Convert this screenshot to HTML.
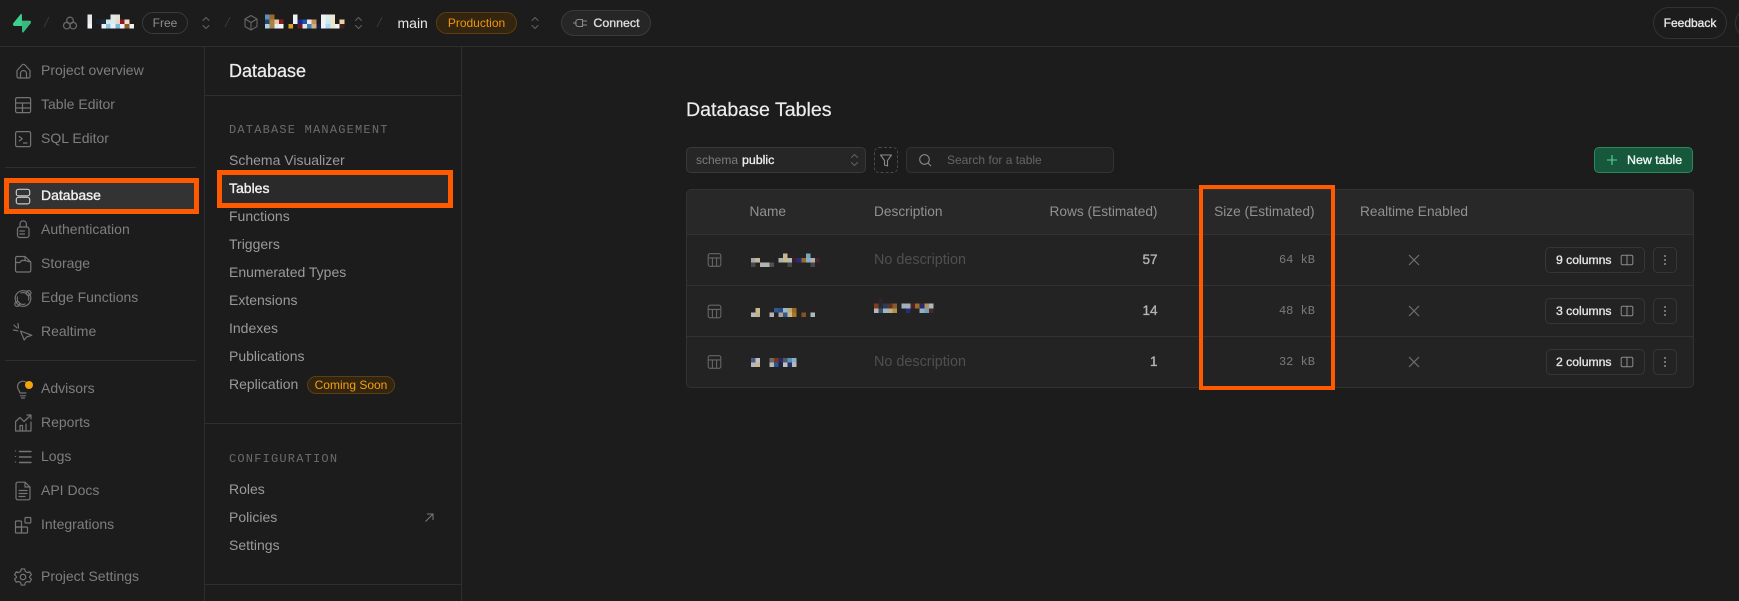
<!DOCTYPE html>
<html><head><meta charset="utf-8"><title>Database Tables</title>
<style>
html,body{margin:0;padding:0;background:#1c1c1c}
#p{position:relative;width:1739px;height:601px;overflow:hidden;background:#1c1c1c;font-family:"Liberation Sans",sans-serif;font-size:14px;color:#898989}
.a{position:absolute;box-sizing:border-box}
.t{position:absolute;white-space:nowrap;line-height:20px;height:20px}
.n{color:#7e7e7e;left:41px}
.s{color:#9a9a9a;left:229px}
.h{font-family:"Liberation Mono",monospace;font-size:12px;letter-spacing:1.2px;color:#6c6c6c;left:229px}
.th{color:#919191;font-size:13.7px}
.r{text-align:right}
.sm{font-size:12px}
.med{-webkit-text-stroke:.35px currentColor}
.mono{font-family:"Liberation Mono",monospace;font-size:12px;color:#7a7a7a}
.pill{position:absolute;box-sizing:border-box;border-radius:14px;text-align:center;white-space:nowrap;font-size:12px}
.btn{position:absolute;box-sizing:border-box;height:26px;border:1px solid #363636;border-radius:5px;background:#222}
.line{position:absolute;background:#2e2e2e}
svg{position:absolute;left:0;top:0}
.i{fill:none;stroke:#747474;stroke-width:1.2;stroke-linecap:round;stroke-linejoin:round}
.m rect{width:1px;height:1px}
.m{shape-rendering:crispEdges}
</style></head><body><div id="p">

<!-- lines -->
<div class="line" style="left:0;top:46px;width:1739px;height:1px"></div>
<div class="line" style="left:204px;top:46px;width:1px;height:555px"></div>
<div class="line" style="left:461px;top:46px;width:1px;height:555px"></div>
<div class="line" style="left:205px;top:95px;width:256px;height:1px"></div>
<div class="line" style="left:205px;top:423px;width:256px;height:1px"></div>
<div class="line" style="left:205px;top:584px;width:256px;height:1px"></div>
<div class="line" style="left:5px;top:167px;width:191px;height:1px"></div>
<div class="line" style="left:5px;top:360px;width:191px;height:1px"></div>

<!-- header pills -->
<div class="pill" style="left:142px;top:12px;width:46px;height:22px;border:1px solid #3a3a3a;line-height:20px;color:#8f8f8f">Free</div>
<div class="t" style="left:397.5px;top:13px;color:#e6e6e6;font-size:14px">main</div>
<div class="pill" style="left:436px;top:12px;width:81px;height:22px;border:1px solid #5c3f10;background:#33250f;line-height:20px;color:#f0960e">Production</div>
<div class="pill med" style="left:561px;top:10px;width:90px;height:26px;border:1px solid #3a3a3a;background:#262626;line-height:25px;color:#dcdcdc;padding-left:21px;font-size:12.4px">Connect</div>
<div class="pill med" style="left:1653px;top:7px;width:74px;height:32px;border:1px solid #333;border-radius:16px;line-height:31px;color:#e6e6e6;font-size:12px">Feedback</div>
<div class="pill" style="left:1735px;top:7px;width:40px;height:32px;border:1px solid #333;border-radius:16px"></div>

<!-- orange boxes -->
<div class="a" style="left:3.5px;top:178px;width:195px;height:36px;border:5px solid #ff5a00;background:#333"></div>
<div class="a" style="left:217px;top:170px;width:236px;height:38px;border:5px solid #ff5a00;background:#2a2a2a"></div>

<!-- nav -->
<div class="t n" style="top:60px">Project overview</div>
<div class="t n" style="top:94px">Table Editor</div>
<div class="t n" style="top:128px">SQL Editor</div>
<div class="t n med" style="top:185px;color:#f0f0f0">Database</div>
<div class="t n" style="top:219px">Authentication</div>
<div class="t n" style="top:253px">Storage</div>
<div class="t n" style="top:287px">Edge Functions</div>
<div class="t n" style="top:321px">Realtime</div>
<div class="t n" style="top:378px">Advisors</div>
<div class="t n" style="top:412px">Reports</div>
<div class="t n" style="top:446px">Logs</div>
<div class="t n" style="top:480px">API Docs</div>
<div class="t n" style="top:514px">Integrations</div>
<div class="t n" style="top:566px">Project Settings</div>

<!-- submenu -->
<div class="t" style="left:229px;top:61px;font-size:18px;color:#ececec;-webkit-text-stroke:.25px #ececec">Database</div>
<div class="t h" style="top:120px">DATABASE MANAGEMENT</div>
<div class="t s" style="top:150px">Schema Visualizer</div>
<div class="t s med" style="top:178px;color:#f2f2f2">Tables</div>
<div class="t s" style="top:206px">Functions</div>
<div class="t s" style="top:234px">Triggers</div>
<div class="t s" style="top:262px">Enumerated Types</div>
<div class="t s" style="top:290px">Extensions</div>
<div class="t s" style="top:318px">Indexes</div>
<div class="t s" style="top:346px">Publications</div>
<div class="t s" style="top:374px">Replication</div>
<div class="pill" style="left:307px;top:376px;width:88px;height:18px;border:1px solid #5c3f10;background:#33250f;line-height:16px;color:#f5a010">Coming Soon</div>
<div class="t h" style="top:449px">CONFIGURATION</div>
<div class="t s" style="top:479px">Roles</div>
<div class="t s" style="top:507px">Policies</div>
<div class="t s" style="top:535px">Settings</div>

<!-- main -->
<div class="t" style="left:686px;top:99.5px;font-size:19.6px;color:#ececec;-webkit-text-stroke:.2px #ececec">Database Tables</div>

<div class="btn" style="left:686px;top:147px;width:180px;background:#262626;border-color:#3a3a3a"></div>
<div class="t sm" style="left:696px;top:150px;color:#7d7d7d">schema</div>
<div class="t sm med" style="left:742px;top:150px;color:#ededed;font-size:12.4px">public</div>
<div class="btn" style="left:874px;top:147px;width:24px;border:1px dashed #4a4a4a;background:transparent"></div>
<div class="btn" style="left:906px;top:147px;width:208px;background:#222;border-color:#333"></div>
<div class="t sm" style="left:947px;top:150px;color:#666">Search for a table</div>
<div class="btn" style="left:1594px;top:147px;width:99px;background:#17583c;border-color:#2a8a5e"></div>
<div class="t sm med" style="left:1627px;top:150px;color:#ecf7f1;font-size:12.4px">New table</div>

<!-- table -->
<div class="a" style="left:686px;top:189px;width:1008px;height:199px;border:1px solid #323232;border-radius:5px;background:#232323;overflow:hidden">
  <div class="a" style="left:0;top:0;width:1006px;height:44px;background:#282828"></div>
  <div class="a" style="left:0;top:44px;width:1006px;height:1px;background:#323232"></div>
  <div class="a" style="left:0;top:95px;width:1006px;height:1px;background:#323232"></div>
  <div class="a" style="left:0;top:146px;width:1006px;height:1px;background:#323232"></div>
</div>

<!-- orange box 3 -->
<div class="a" style="left:1198.7px;top:185px;width:136.5px;height:205px;border:4.6px solid #ff5a00"></div>

<div class="t th" style="left:749.5px;top:202px">Name</div>
<div class="t th" style="left:874px;top:202px">Description</div>
<div class="t th r" style="left:1007px;width:150.5px;top:202px">Rows (Estimated)</div>
<div class="t th r" style="left:1207px;width:107.5px;top:202px">Size (Estimated)</div>
<div class="t th" style="left:1360px;top:202px">Realtime Enabled</div>

<div class="t" style="left:874px;top:250px;color:#4f4f4f;font-size:14.4px">No description</div>
<div class="t" style="left:874px;top:352px;color:#4f4f4f;font-size:14.4px">No description</div>

<div class="t r med" style="left:1100px;width:57.5px;top:250px;color:#b4b4b4;font-size:13.5px">57</div>
<div class="t r med" style="left:1100px;width:57.5px;top:301px;color:#b4b4b4;font-size:13.5px">14</div>
<div class="t r med" style="left:1100px;width:57.5px;top:352px;color:#b4b4b4;font-size:13.5px">1</div>

<div class="t mono r" style="left:1215px;width:100px;top:250px">64 kB</div>
<div class="t mono r" style="left:1215px;width:100px;top:301px">48 kB</div>
<div class="t mono r" style="left:1215px;width:100px;top:352px">32 kB</div>

<div class="btn" style="left:1545px;top:247px;width:100px;background:#232323"></div>
<div class="btn" style="left:1545px;top:298px;width:100px;background:#232323"></div>
<div class="btn" style="left:1546px;top:349px;width:99px;background:#232323"></div>
<div class="btn" style="left:1653px;top:247px;width:24px;background:#232323"></div>
<div class="btn" style="left:1653px;top:298px;width:24px;background:#232323"></div>
<div class="btn" style="left:1653px;top:349px;width:24px;background:#232323"></div>
<div class="t sm r med" style="left:1550px;width:61.5px;top:250px;color:#e4e4e4;font-size:12.2px">9 columns</div>
<div class="t sm r med" style="left:1550px;width:61.5px;top:301px;color:#e4e4e4;font-size:12.2px">3 columns</div>
<div class="t sm r med" style="left:1550px;width:61.5px;top:352px;color:#e4e4e4;font-size:12.2px">2 columns</div>

<svg width="1739" height="601" viewBox="0 0 1739 601">
<defs>
<g id="ud"><path d="M-3 -2.5 L0 -5.5 L3 -2.5 M-3 2.5 L0 5.5 L3 2.5" fill="none" stroke="#5e5e5e" stroke-width="1.1" stroke-linecap="round" stroke-linejoin="round"/></g>
<g id="tb"><rect x="3" y="3" width="18" height="18" rx="2.5"/><path d="M3 9H21M9 9V21M15 9V21"/></g>
<g id="colc"><rect x="-5.8" y="-4.7" width="11.6" height="9.4" rx="1.5" fill="none" stroke="#8c8c8c" stroke-width="1"/><path d="M0 -4.7V4.7" stroke="#8c8c8c" stroke-width="1"/></g>
<g id="dots"><circle cy="-4" r="1" fill="#8c8c8c"/><circle r="1" fill="#8c8c8c"/><circle cy="4" r="1" fill="#8c8c8c"/></g>
<g id="x"><path d="M-5 -5L5 5M5 -5L-5 5" stroke="#707070" stroke-width="1.2" fill="none"/></g>
</defs>

<!-- logo -->
<g transform="translate(13,14) scale(.165)">
<path d="M63.7 110.3c-2.9 3.6-8.7 1.6-8.8-3l-1-67.3h45.8c8.3 0 12.9 9.6 7.7 16z" fill="#36b87f"/>
<path d="M45.3 2.1c2.9-3.6 8.7-1.6 8.8 3l.4 67.3H9.3c-8.3 0-12.9-9.6-7.7-16z" fill="#3ecf8e"/>
</g>
<!-- slashes -->
<path d="M44 27L49 17M225 27L230 17M377 27L382 17" stroke="#383838" stroke-width="1" fill="none"/>
<!-- org icon -->
<g fill="none" stroke="#666" stroke-width="1.3"><circle cx="70" cy="20.5" r="3.3"/><circle cx="66.8" cy="25.6" r="3.3"/><circle cx="73.2" cy="25.6" r="3.3"/></g>
<!-- cube -->
<g fill="none" stroke="#666" stroke-width="1.1" stroke-linejoin="round"><path d="M251 15.5L257 19V26.5L251 30L245 26.5V19Z"/><path d="M245 19L251 22.5L257 19M251 22.5V30"/></g>
<use href="#ud" x="206" y="23"/><use href="#ud" x="358.5" y="23"/><use href="#ud" x="535" y="23"/>
<!-- connect icon -->
<g fill="none" stroke="#8a8a8a" stroke-width="1.1"><path d="M578 19.5H582.5V26.5H578a2.5 2.5 0 0 1-2-3.5 2.5 2.5 0 0 1 2-3.5Z"/><path d="M573 23H576M582.5 21H587M582.5 25H587"/></g>

<!-- nav icons -->
<g class="i">
<path d="M17 70.5L22 65a2 2 0 0 1 3 0L30 70.5V76.5a1.5 1.5 0 0 1-1.5 1.5H18.5a1.5 1.5 0 0 1-1.5-1.5ZM20.5 78V73.5a3 3 0 0 1 6 0V78"/>
<rect x="15.6" y="97.6" width="15" height="15" rx="1.5"/><path d="M15.6 103H30.6M15.6 108H30.6M22.5 103V112.6"/>
<rect x="15.6" y="131.6" width="15" height="15" rx="1.5"/><path d="M19.3 136.5L22.3 138.8L19.3 141M23.5 143H27"/>
<g style="stroke:#c8c8c8"><rect x="16.3" y="189.3" width="13.4" height="6.6" rx="2.2"/><rect x="16.3" y="197.3" width="13.4" height="6.6" rx="2.2"/></g>
<rect x="17.5" y="227" width="11.5" height="10.5" rx="2.2"/><path d="M20 227V224a3.2 3.2 0 0 1 6.4 0V227M19.8 231H24.5M19.8 234H24.5"/>
<path d="M15.6 263V258a1.5 1.5 0 0 1 1.5-1.5H25L30.8 262V270.5a1.5 1.5 0 0 1-1.5 1.5H17a1.5 1.5 0 0 1-1.5-1.5ZM15.6 262.5H20L21.5 260.5H25.5M25 256.5V260.5L30.8 262"/>
<circle cx="23" cy="298.5" r="7.8"/><circle cx="28.6" cy="293" r="2.4"/><circle cx="17.2" cy="304" r="2.4"/><path d="M17.5 297a5.7 5.7 0 0 0 7.5 7M28.5 300a5.7 5.7 0 0 0-7.5-7"/>
<path d="M20.5 331L31.8 335.3L26.6 337L24.2 340Z"/><path d="M18 323.5L18.5 328M13.5 330L17.8 330.8M14 325L17 328"/>
<path d="M20 393C20 391 17.5 390 17.5 386.5a5.5 5.5 0 0 1 9-4M26 393H20M20.5 395.8H25.5M21.5 398H24.5"/>
<path d="M15.6 431V421.5L20 417.5L24 421.5L31 415M27 415H31V419M31 422V431H15.6M20 431V425.5H22.5V431M26 431V424M28 431"/>
<path d="M19.5 451.5H31M19.5 457H31M19.5 462.5H31" stroke-width="1.4"/><path d="M15.5 450.5V452.5M15.5 456V458M15.5 461.5V463.5" stroke-dasharray="1 1" stroke-linecap="butt"/>
<path d="M16 484a1.8 1.8 0 0 1 1.8-1.8H25L30 487V498a1.8 1.8 0 0 1-1.8 1.8H17.8A1.8 1.8 0 0 1 16 498ZM25 482.2V487H30M19 490.5H27M19 493.5H27M19 496.5H25"/>
<rect x="15.5" y="521" width="6" height="6" rx=".8"/><rect x="15.5" y="527" width="6" height="6" rx=".8"/><rect x="21.5" y="527" width="6" height="6" rx=".8"/><rect x="25" y="517.5" width="5.8" height="5.5" rx=".8"/>
<g transform="translate(12.8,566.8) scale(.85)" stroke-width="1.4"><circle cx="12" cy="12" r="3.2"/><path d="M10 2.5H14L14.7 5.4L17 6.7L19.9 5.9L21.9 9.3L19.8 11.4V12.6L21.9 14.7L19.9 18.1L17 17.3L14.7 18.6L14 21.5H10L9.3 18.6L7 17.3L4.1 18.1L2.1 14.7L4.2 12.6V11.4L2.1 9.3L4.1 5.9L7 6.7L9.3 5.4Z"/></g>
</g>
<circle cx="29" cy="385" r="4" fill="#f5a30a"/>
<!-- policies arrow -->
<path d="M425.5 521.5L433 514M427 514H433V520" fill="none" stroke="#7a7a7a" stroke-width="1"/>

<!-- toolbar icons -->
<use href="#ud" x="854.5" y="160"/>
<path d="M880.5 155H891.5L887.5 160.5V166L884.5 165V160.5Z" fill="none" stroke="#8a8a8a" stroke-width="1.1" stroke-linejoin="round"/>
<circle cx="924.5" cy="159.5" r="4.8" fill="none" stroke="#8a8a8a" stroke-width="1.1"/><path d="M928 163L931 166" stroke="#8a8a8a" stroke-width="1.1"/>
<path d="M1607 160H1617M1612 155V165" stroke="#5fd09a" stroke-width="1.1"/>

<!-- table icons -->
<g fill="none" stroke="#666" stroke-width="1.55">
<g transform="translate(706.1,251.6) scale(.7)"><use href="#tb"/></g>
<g transform="translate(706.1,303.1) scale(.7)"><use href="#tb"/></g>
<g transform="translate(706.1,353.6) scale(.7)"><use href="#tb"/></g>
</g>
<use href="#x" x="1414" y="260"/><use href="#x" x="1414" y="311"/><use href="#x" x="1414" y="362"/>
<use href="#colc" x="1627" y="260"/><use href="#colc" x="1627" y="311"/><use href="#colc" x="1627" y="362"/>
<use href="#dots" x="1665" y="260"/><use href="#dots" x="1665" y="311"/><use href="#dots" x="1665" y="362"/>

<!-- mosaics -->
<g class="m">
<g transform="translate(87.3,14.7) scale(4.67)">
<rect x="0" y="0" fill="#e2e5ea"/><rect x="0" y="1" fill="#e8ebee"/><rect x="0" y="2" fill="#f4f4f4"/>
<rect x="5" y="0" fill="#e0e8e8"/><rect x="6" y="0" fill="#eadfd3"/>
<rect x="2" y="1" fill="#1a2236"/><rect x="3" y="1" fill="#1f2c3c"/><rect x="4" y="1" fill="#cfe8ee"/><rect x="5" y="1" fill="#d6eef2"/><rect x="6" y="1" fill="#ead9c7"/><rect x="7" y="1" fill="#8b1a1f"/><rect x="8" y="1" fill="#efdfd0"/>
<rect x="3" y="2" fill="#eef2f5"/><rect x="4" y="2" fill="#8fc3e6"/><rect x="5" y="2" fill="#f0f0f0"/><rect x="6" y="2" fill="#7db8e0"/><rect x="7" y="2" fill="#f2f2f2"/><rect x="8" y="2" fill="#8a5a2a"/><rect x="9" y="2" fill="#f0f0f0"/>
</g>
<g transform="translate(265,14.7) scale(4.67)">
<rect x="0" y="0" fill="#5a8fbf"/><rect x="1" y="0" fill="#9a6a2a"/><rect x="6" y="0" fill="#f0f0f0"/><rect x="12" y="0" fill="#eef2f4"/><rect x="13" y="0" fill="#d8eef2"/><rect x="14" y="0" fill="#ece8d0"/>
<rect x="0" y="1" fill="#1f4a6e"/><rect x="1" y="1" fill="#b08040"/><rect x="2" y="1" fill="#e8c8a0"/><rect x="3" y="1" fill="#8b1a1f"/><rect x="6" y="1" fill="#f0f0f0"/><rect x="7" y="1" fill="#1f2590"/><rect x="8" y="1" fill="#2255aa"/><rect x="9" y="1" fill="#e8e8e8"/><rect x="10" y="1" fill="#c09060"/><rect x="12" y="1" fill="#eef3f6"/><rect x="13" y="1" fill="#cfe8ee"/><rect x="14" y="1" fill="#e8e6c8"/><rect x="16" y="1" fill="#f0cfa0"/>
<rect x="0" y="2" fill="#a8d0e8"/><rect x="1" y="2" fill="#a88050"/><rect x="2" y="2" fill="#e4eef4"/><rect x="3" y="2" fill="#f4f4f4"/><rect x="5" y="2" fill="#d8a020"/><rect x="7" y="2" fill="#6a1a20"/><rect x="8" y="2" fill="#e8e8e8"/><rect x="9" y="2" fill="#4080b0"/><rect x="10" y="2" fill="#d0b080"/><rect x="11" y="2" fill="#1a2040"/><rect x="12" y="2" fill="#f0f4f8"/><rect x="13" y="2" fill="#b0d8f0"/><rect x="14" y="2" fill="#e8e8d0"/><rect x="15" y="2" fill="#f0f0f0"/><rect x="16" y="2" fill="#40201c"/>
</g>
<g transform="translate(751,253.3) scale(4.57)">
<rect x="7" y="0" fill="#c8b88c"/><rect x="12" y="0" fill="#7ba6bc"/>
<rect x="0" y="1" fill="#a8a8a8"/><rect x="1" y="1" fill="#c8b89a"/><rect x="6" y="1" fill="#b0b0b0"/><rect x="7" y="1" fill="#c8b88c"/><rect x="8" y="1" fill="#b8b8b8"/><rect x="9" y="1" fill="#3a2228"/><rect x="10" y="1" fill="#2a2a78"/><rect x="11" y="1" fill="#9a6a2a"/><rect x="12" y="1" fill="#85b0c4"/><rect x="13" y="1" fill="#b0b0b0"/><rect x="14" y="1" fill="#4a2228"/>
<rect x="0" y="2" fill="#4a4a40"/><rect x="2" y="2" fill="#b4b4b4"/><rect x="3" y="2" fill="#b4b4b4"/><rect x="4" y="2" fill="#505050"/><rect x="8" y="2" fill="#404848"/><rect x="13" y="2" fill="#484848"/>
</g>
<g transform="translate(751,308) scale(4.57)">
<rect x="1" y="0" fill="#c8b88c"/><rect x="5" y="0" fill="#2a5a90"/><rect x="6" y="0" fill="#2a4a8a"/><rect x="7" y="0" fill="#9ab8c0"/><rect x="8" y="0" fill="#c0a878"/><rect x="9" y="0" fill="#9a6a20"/><rect x="13" y="0" fill="#331c24"/>
<rect x="0" y="1" fill="#b8b8b8"/><rect x="1" y="1" fill="#c0b090"/><rect x="4" y="1" fill="#b4b4b4"/><rect x="6" y="1" fill="#b0a090"/><rect x="7" y="1" fill="#2a5a90"/><rect x="8" y="1" fill="#c8b890"/><rect x="9" y="1" fill="#a87820"/><rect x="11" y="1" fill="#8a5020"/><rect x="13" y="1" fill="#a0c0b8"/>
</g>
<g transform="translate(874,303.7) scale(4.57)">
<rect x="1" y="-1" fill="#2e2624"/>
<rect x="0" y="0" fill="#803c20"/><rect x="1" y="0" fill="#2a2a2a"/><rect x="2" y="0" fill="#2a3a60"/><rect x="3" y="0" fill="#5a3420"/><rect x="4" y="0" fill="#8a5a2a"/><rect x="6" y="0" fill="#a0b0b8"/><rect x="7" y="0" fill="#a0b0b8"/><rect x="8" y="0" fill="#4a2228"/><rect x="9" y="0" fill="#a06a20"/><rect x="10" y="0" fill="#2a2a6a"/><rect x="11" y="0" fill="#b09060"/><rect x="12" y="0" fill="#b0b8bc"/>
<rect x="0" y="1" fill="#b8b8b8"/><rect x="1" y="1" fill="#3a4a70"/><rect x="2" y="1" fill="#9ab8c0"/><rect x="3" y="1" fill="#b8b090"/><rect x="4" y="1" fill="#b09050"/><rect x="7" y="1" fill="#2a2a80"/><rect x="10" y="1" fill="#90b0c0"/><rect x="11" y="1" fill="#70a0c0"/><rect x="12" y="1" fill="#4a2828"/>
</g>
<g transform="translate(751,358) scale(4.57)">
<rect x="0" y="0" fill="#4a5a80"/><rect x="1" y="0" fill="#c0c0c8"/><rect x="4" y="0" fill="#6a6a60"/><rect x="5" y="0" fill="#803020"/><rect x="6" y="0" fill="#2a2a60"/><rect x="7" y="0" fill="#505868"/><rect x="8" y="0" fill="#5a90c0"/><rect x="9" y="0" fill="#8ab0c8"/>
<rect x="0" y="1" fill="#b8b8b8"/><rect x="1" y="1" fill="#c8b890"/><rect x="4" y="1" fill="#b8b8b8"/><rect x="5" y="1" fill="#205a90"/><rect x="6" y="1" fill="#202040"/><rect x="7" y="1" fill="#c0c0c0"/><rect x="8" y="1" fill="#203060"/><rect x="9" y="1" fill="#b8b8b8"/>
</g>
</g>
</svg>
</div></body></html>
